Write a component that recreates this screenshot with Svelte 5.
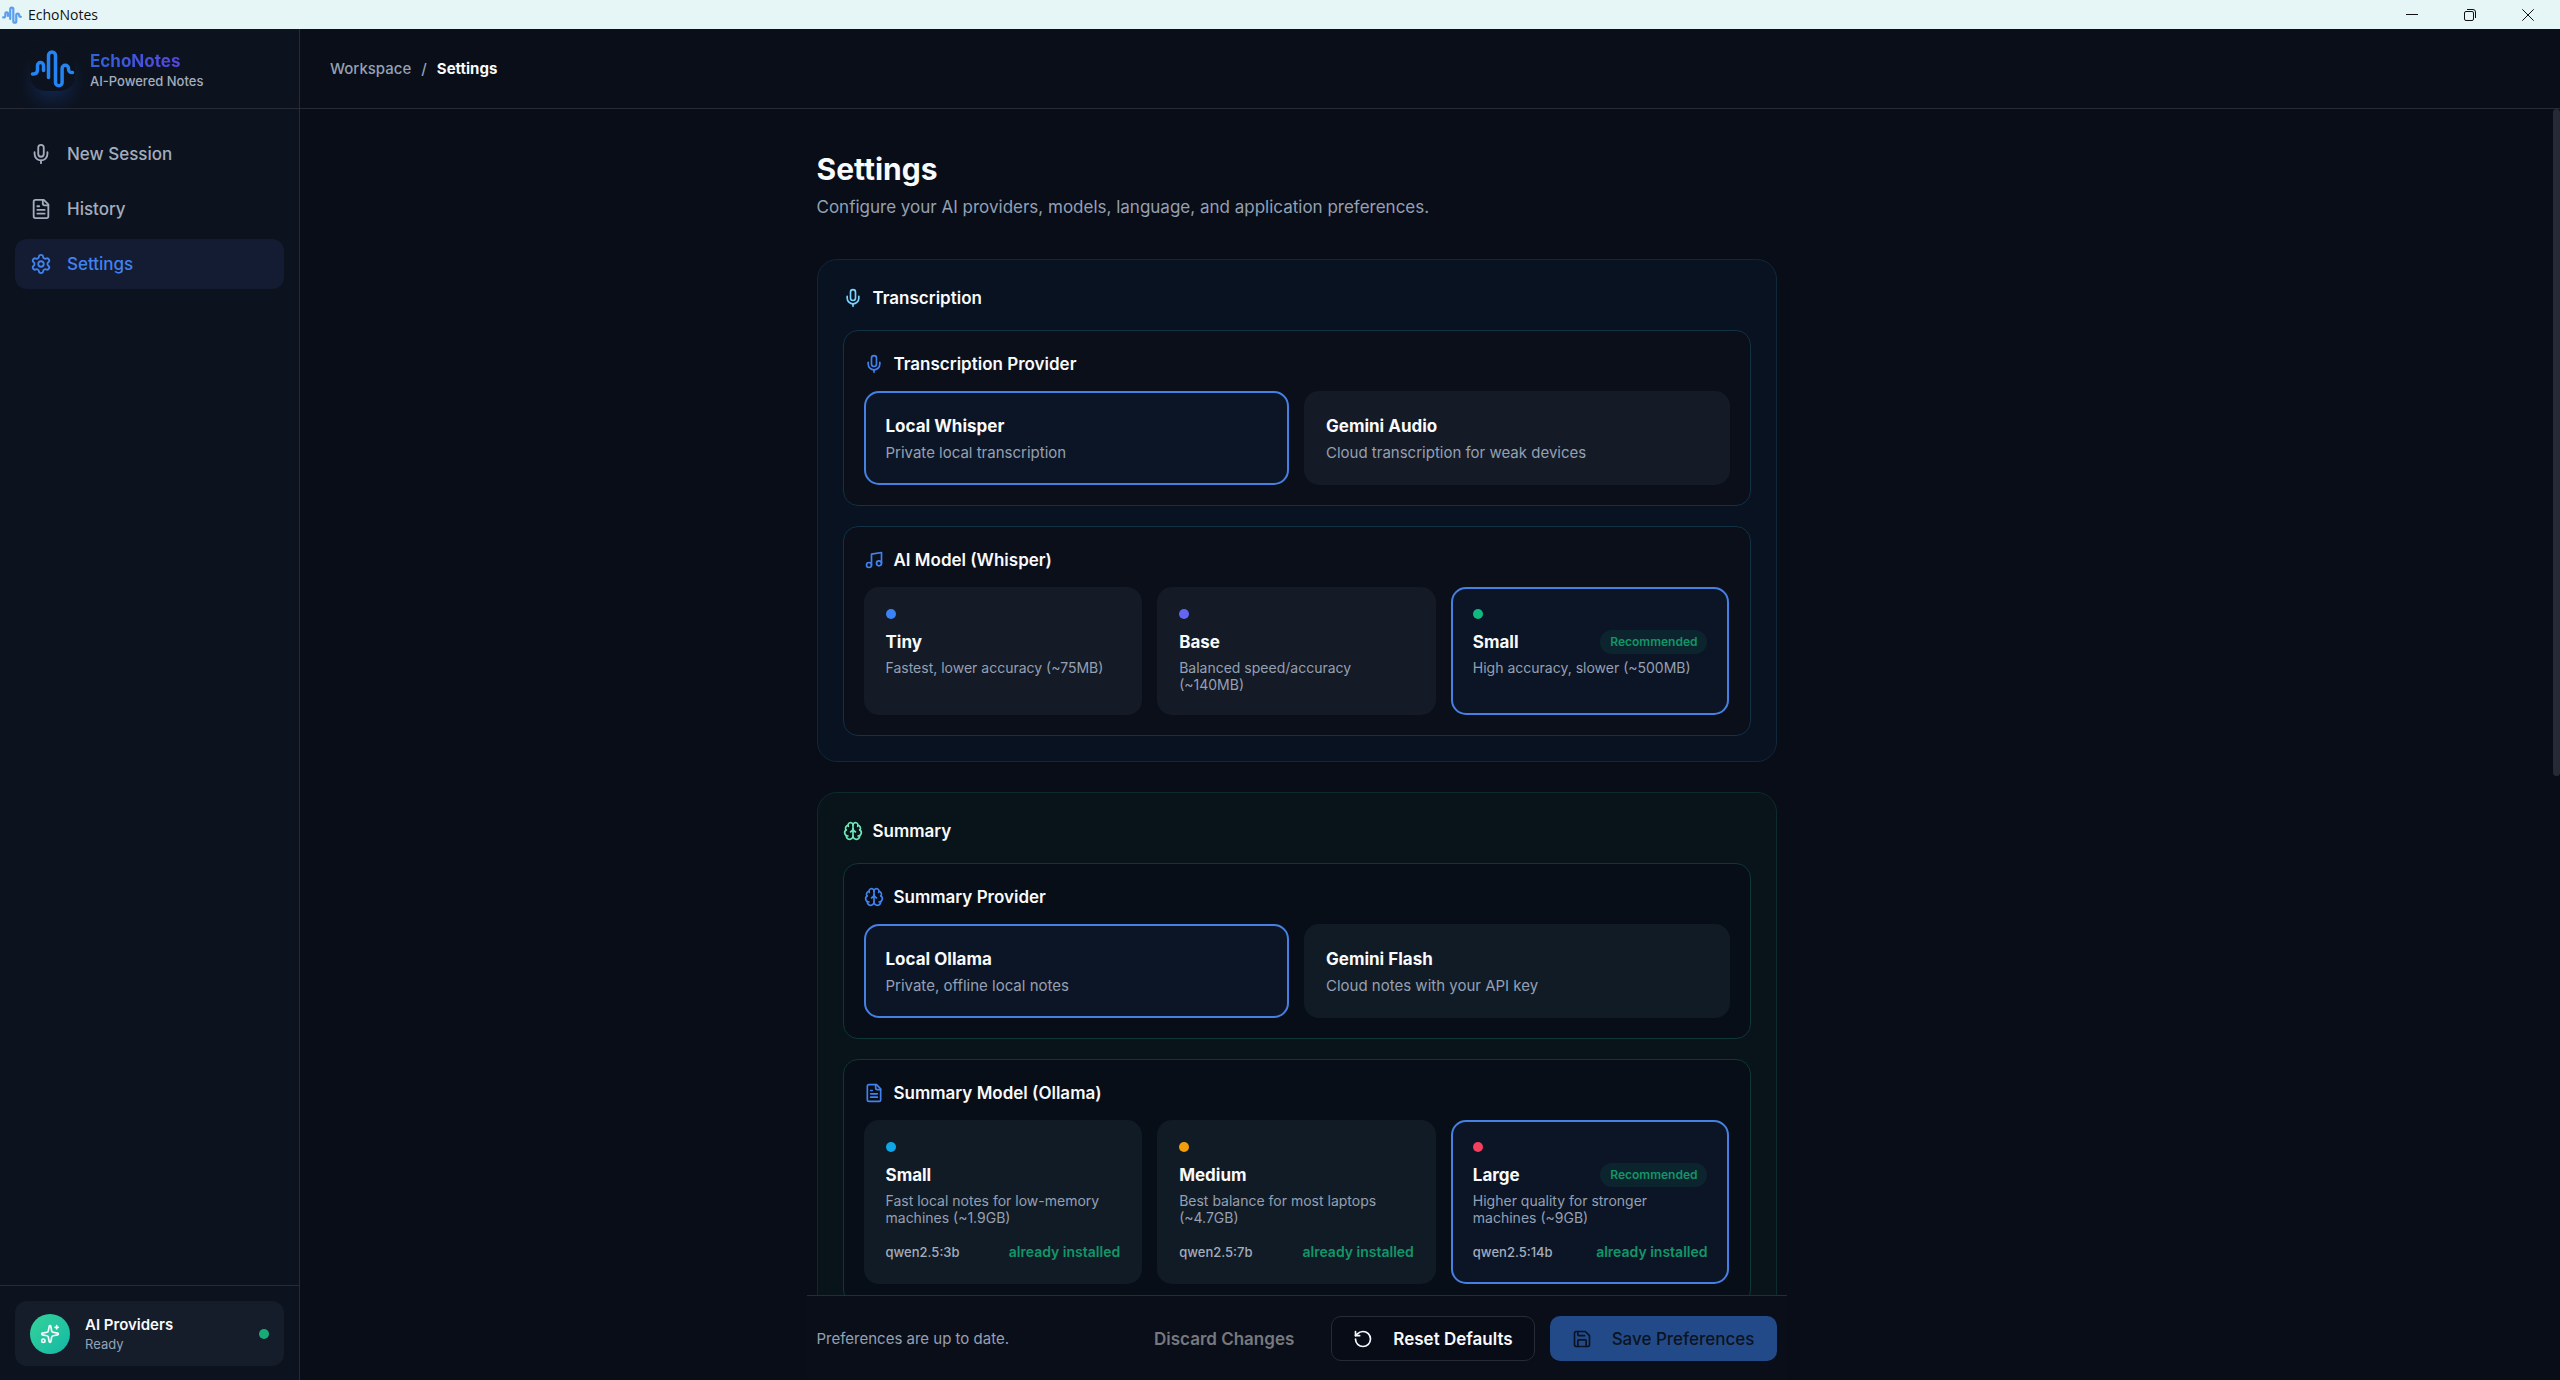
<script>
  const navItems = [
    { label: "New Session", icon: "mic" },
    { label: "History", icon: "file" },
    { label: "Settings", icon: "gear" },
  ];

  let activePage = $state("Settings");

  const sections = [
    {
      id: "transcription",
      title: "Transcription",
      icon: "mic",
      panels: [
        {
          id: "transcriptionProvider",
          title: "Transcription Provider",
          icon: "mic",
          providers: [
            { name: "Local Whisper", desc: "Private local transcription" },
            { name: "Gemini Audio", desc: "Cloud transcription for weak devices" },
          ],
        },
        {
          id: "whisperModel",
          title: "AI Model (Whisper)",
          icon: "music",
          models: [
            { name: "Tiny", desc: "Fastest, lower accuracy (~75MB)", dot: "blue" },
            { name: "Base", desc: "Balanced speed/accuracy (~140MB)", dot: "indigo" },
            {
              name: "Small",
              desc: "High accuracy, slower (~500MB)",
              dot: "emerald",
              recommended: true,
            },
          ],
        },
      ],
    },
    {
      id: "summary",
      title: "Summary",
      icon: "brain",
      panels: [
        {
          id: "summaryProvider",
          title: "Summary Provider",
          icon: "brain",
          providers: [
            { name: "Local Ollama", desc: "Private, offline local notes" },
            { name: "Gemini Flash", desc: "Cloud notes with your API key" },
          ],
        },
        {
          id: "ollamaModel",
          title: "Summary Model (Ollama)",
          icon: "file",
          models: [
            {
              name: "Small",
              desc: "Fast local notes for low-memory machines (~1.9GB)",
              dot: "sky",
              tag: "qwen2.5:3b",
            },
            {
              name: "Medium",
              desc: "Best balance for most laptops (~4.7GB)",
              dot: "amber",
              tag: "qwen2.5:7b",
            },
            {
              name: "Large",
              desc: "Higher quality for stronger machines (~9GB)",
              dot: "rose",
              tag: "qwen2.5:14b",
              recommended: true,
            },
          ],
        },
      ],
    },
  ];

  const defaults = {
    transcriptionProvider: "Local Whisper",
    whisperModel: "Small",
    summaryProvider: "Local Ollama",
    ollamaModel: "Large",
  };

  let saved = $state({ ...defaults });
  let prefs = $state({ ...defaults });
  let dirty = $derived(Object.keys(prefs).some((k) => prefs[k] !== saved[k]));

  function discard() {
    prefs = { ...saved };
  }

  function reset() {
    prefs = { ...defaults };
  }

  function save() {
    saved = { ...prefs };
  }
</script>

{#snippet logo()}
  <svg class="logo" viewBox="30 46 45 45" fill="none" stroke-linecap="round" stroke-linejoin="round">
    <path d="M32.5 74h1c3 0 4-2 4-4.500v-4a3 3 0 0 1 6 0v5" />
    <path d="M48.500 77.500V55.500a3.500 3.500 0 0 1 7 0v27a3.300 3.300 0 0 0 6.600 0V68.500a3.200 3.200 0 0 1 6.400 0c0 3 .8 4 4 4" />
  </svg>
{/snippet}

{#snippet icon(name)}
  <svg
    class="icon"
    viewBox="0 0 24 24"
    fill="none"
    stroke="currentColor"
    stroke-width="2"
    stroke-linecap="round"
    stroke-linejoin="round"
    aria-hidden="true"
  >
    {#if name === "mic"}
      <path d="M12 19v3" />
      <path d="M19 10v2a7 7 0 0 1-14 0v-2" />
      <rect x="9" y="2" width="6" height="13" rx="3" />
    {:else if name === "file"}
      <path d="M15 2H6a2 2 0 0 0-2 2v16a2 2 0 0 0 2 2h12a2 2 0 0 0 2-2V7Z" />
      <path d="M14 2v4a2 2 0 0 0 2 2h4" />
      <path d="M10 9H8" />
      <path d="M16 13H8" />
      <path d="M16 17H8" />
    {:else if name === "gear"}
      <path
        d="M9.671 4.136a2.34 2.34 0 0 1 4.659 0 2.34 2.34 0 0 0 3.319 1.915 2.34 2.34 0 0 1 2.33 4.033 2.34 2.34 0 0 0 0 3.831 2.34 2.34 0 0 1-2.33 4.033 2.34 2.34 0 0 0-3.319 1.915 2.34 2.34 0 0 1-4.659 0 2.34 2.34 0 0 0-3.32-1.915 2.34 2.34 0 0 1-2.33-4.033 2.34 2.34 0 0 0 0-3.831A2.34 2.34 0 0 1 6.35 6.051a2.34 2.34 0 0 0 3.319-1.915"
      />
      <circle cx="12" cy="12" r="3" />
    {:else if name === "music"}
      <path d="M9 18V5l12-2v13" />
      <circle cx="6" cy="18" r="3" />
      <circle cx="18" cy="16" r="3" />
    {:else if name === "brain"}
      <path d="M12 18V5" />
      <path d="M15 13a4.17 4.17 0 0 1-3-4 4.17 4.17 0 0 1-3 4" />
      <path d="M17.598 6.5A3 3 0 1 0 12 5a3 3 0 1 0-5.598 1.5" />
      <path d="M17.997 5.125a4 4 0 0 1 2.526 5.77" />
      <path d="M18 18a4 4 0 0 0 2-7.464" />
      <path d="M19.967 17.483A4 4 0 1 1 12 18a4 4 0 1 1-7.967-.517" />
      <path d="M6 18a4 4 0 0 1-2-7.464" />
      <path d="M6.003 5.125a4 4 0 0 0-2.526 5.77" />
    {:else if name === "sparkles"}
      <path
        d="M11.017 2.814a1 1 0 0 1 1.966 0l1.051 5.558a2 2 0 0 0 1.594 1.594l5.558 1.051a1 1 0 0 1 0 1.966l-5.558 1.051a2 2 0 0 0-1.594 1.594l-1.051 5.558a1 1 0 0 1-1.966 0l-1.051-5.558a2 2 0 0 0-1.594-1.594l-5.558-1.051a1 1 0 0 1 0-1.966l5.558-1.051a2 2 0 0 0 1.594-1.594z"
      />
      <path d="M20 2v4" />
      <path d="M22 4h-4" />
      <circle cx="4" cy="20" r="2" />
    {:else if name === "reset"}
      <path d="M3 12a9 9 0 1 0 9-9 9.75 9.75 0 0 0-6.740 2.740L3 8" />
      <path d="M3 3v5h5" />
    {:else if name === "save"}
      <path
        d="M15.200 3a2 2 0 0 1 1.400.6l3.800 3.800a2 2 0 0 1 .6 1.400V19a2 2 0 0 1-2 2H5a2 2 0 0 1-2-2V5a2 2 0 0 1 2-2z"
      />
      <path d="M17 21v-7a1 1 0 0 0-1-1H8a1 1 0 0 0-1 1v7" />
      <path d="M7 3v4a1 1 0 0 0 1 1h7" />
    {/if}
  </svg>
{/snippet}

<div class="window">
  <div class="titlebar">
    <div class="titlebar-name">
      {@render logo()}
      <span>EchoNotes</span>
    </div>
    <div class="titlebar-controls">
      <button type="button" aria-label="Minimize">
        <svg viewBox="0 0 12 12"><path d="M0 5.500h12" /></svg>
      </button>
      <button type="button" aria-label="Restore">
        <svg viewBox="0 0 12 12">
          <rect x=".5" y="2.500" width="9" height="9" rx="1.500" />
          <path d="M3 .5h6a2.500 2.500 0 0 1 2.500 2.500v6" />
        </svg>
      </button>
      <button type="button" aria-label="Close">
        <svg viewBox="0 0 12 12"><path d="M.3.300l11.400 11.400M11.700.300L.3 11.700" /></svg>
      </button>
    </div>
  </div>

  <div class="app">
    <aside class="sidebar">
      <div class="brand">
        <div class="brand-mark">{@render logo()}</div>
        <div>
          <div class="brand-name">EchoNotes</div>
          <div class="brand-tagline">AI-Powered Notes</div>
        </div>
      </div>

      <nav class="nav">
        {#each navItems as item (item.label)}
          <a
            href="#{item.label}"
            class="nav-item"
            class:active={activePage === item.label}
            onclick={() => (activePage = item.label)}
          >
            {@render icon(item.icon)}
            {item.label}
          </a>
        {/each}
      </nav>

      <div class="sidebar-footer">
        <div class="status">
          <div class="status-avatar">{@render icon("sparkles")}</div>
          <div class="status-text">
            <div class="status-title">AI Providers</div>
            <div class="status-sub">Ready</div>
          </div>
          <span class="status-dot"></span>
        </div>
      </div>
    </aside>

    <main class="main">
      <header class="topbar">
        <span>Workspace</span>
        <span>/</span>
        <strong>Settings</strong>
      </header>

      <div class="scroll">
        <div class="page">
          <div class="content">
            <h1>Settings</h1>
            <p class="lead">
              Configure your AI providers, models, language, and application preferences.
            </p>

            {#each sections as section (section.id)}
              <section class="section {section.id}">
                <h2>{@render icon(section.icon)}{section.title}</h2>

                {#each section.panels as panel (panel.id)}
                  <div class="panel">
                    <h3>{@render icon(panel.icon)}{panel.title}</h3>

                    {#if panel.providers}
                      <div class="providers">
                        {#each panel.providers as p (p.name)}
                          <button
                            type="button"
                            class="card"
                            class:selected={prefs[panel.id] === p.name}
                            aria-pressed={prefs[panel.id] === p.name}
                            onclick={() => (prefs[panel.id] = p.name)}
                          >
                            <span class="card-title">{p.name}</span>
                            <span class="provider-desc">{p.desc}</span>
                          </button>
                        {/each}
                      </div>
                    {:else}
                      <div class="models">
                        {#each panel.models as m (m.name)}
                          <button
                            type="button"
                            class="card"
                            class:selected={prefs[panel.id] === m.name}
                            aria-pressed={prefs[panel.id] === m.name}
                            onclick={() => (prefs[panel.id] = m.name)}
                          >
                            <span class="dot {m.dot}"></span>
                            <span class="card-head">
                              <span class="card-title">{m.name}</span>
                              {#if m.recommended}
                                <span class="badge">Recommended</span>
                              {/if}
                            </span>
                            <span class="model-desc">{m.desc}</span>
                            {#if m.tag}
                              <span class="model-meta">
                                <span class="model-tag">{m.tag}</span>
                                <span class="installed">already installed</span>
                              </span>
                            {/if}
                          </button>
                        {/each}
                      </div>
                    {/if}
                  </div>
                {/each}
              </section>
            {/each}
          </div>

          <div class="savebar">
            <span class="savebar-status">
              {dirty ? "You have unsaved changes." : "Preferences are up to date."}
            </span>
            <div class="savebar-actions">
              <button type="button" class="btn ghost" disabled={!dirty} onclick={discard}>
                Discard Changes
              </button>
              <button type="button" class="btn outline" onclick={reset}>
                {@render icon("reset")}Reset Defaults
              </button>
              <button type="button" class="btn primary" disabled={!dirty} onclick={save}>
                {@render icon("save")}Save Preferences
              </button>
            </div>
          </div>
        </div>
        <div class="scrollbar"><div class="thumb"></div></div>
      </div>
    </main>
  </div>
</div>

<style>
  :global(body) {
    margin: 0;
    background: #090d18;
  }

  .window {
    height: 100vh;
    display: flex;
    flex-direction: column;
    overflow: hidden;
    font-family: Inter, "Liberation Sans", sans-serif;
    font-size: 17px;
    line-height: 26px;
    color: #f8fafc;
  }

  .window * {
    box-sizing: border-box;
  }

  button {
    font: inherit;
    color: inherit;
    cursor: pointer;
  }

  h1,
  h2,
  h3,
  p {
    margin: 0;
  }

  .icon {
    width: 20px;
    height: 20px;
    flex-shrink: 0;
  }

  .logo {
    display: block;
    stroke: #2484f2;
    stroke-width: 3.5;
  }

  .titlebar {
    flex: 0 0 29px;
    display: flex;
    justify-content: space-between;
    background: #e6f6f7;
    color: #111;
  }

  .titlebar-name {
    display: flex;
    align-items: center;
    gap: 6px;
    padding-left: 2px;
    font-family: "Open Sans", "Noto Sans", sans-serif;
    font-size: 14px;
  }

  .titlebar .logo {
    width: 20px;
    height: 20px;
    stroke: #5a9fee;
    stroke-width: 5;
  }

  .titlebar-controls {
    display: flex;
    padding-right: 3px;
  }

  .titlebar-controls button {
    width: 58px;
    padding: 0;
    border: none;
    background: none;
    display: flex;
    align-items: center;
    justify-content: center;
  }

  .titlebar-controls svg {
    width: 12px;
    height: 12px;
    fill: none;
    stroke: #111;
  }

  .app {
    flex: 1;
    min-height: 0;
    display: flex;
  }

  .sidebar {
    width: 300px;
    flex-shrink: 0;
    display: flex;
    flex-direction: column;
    background: #0d131e;
    border-right: 1px solid #262b36;
  }

  .brand {
    height: 80px;
    flex-shrink: 0;
    display: flex;
    align-items: center;
    gap: 15px;
    padding: 0 30px;
    border-bottom: 1px solid #262b36;
  }

  .brand-mark {
    border-radius: 15px;
    background: #0d131e;
    box-shadow: 0 12px 18px -4px rgba(37, 99, 235, 0.25);
  }

  .brand-mark .logo {
    width: 45px;
    height: 45px;
  }

  .brand-name {
    width: fit-content;
    padding-top: 2px;
    font-size: 17px;
    line-height: 22px;
    font-weight: 700;
    background: linear-gradient(90deg, #2f62dc, #5546de);
    background-clip: text;
    color: transparent;
  }

  .brand-tagline {
    font-size: 13px;
    line-height: 18px;
    font-weight: 500;
    color: #a3adbd;
  }

  .nav {
    flex: 1;
    display: flex;
    flex-direction: column;
    gap: 5px;
    padding: 20px 15px;
  }

  .nav-item {
    height: 50px;
    display: flex;
    align-items: center;
    gap: 15px;
    padding: 0 15px;
    border-radius: 12px;
    font-weight: 500;
    color: #a3adbd;
    text-decoration: none;
  }

  .nav-item .icon {
    width: 22px;
    height: 22px;
  }

  .nav-item.active {
    background: #131c33;
    color: #4282ee;
  }

  .sidebar-footer {
    padding: 15px 15px 14px;
    border-top: 1px solid #262b36;
  }

  .status {
    height: 65px;
    display: flex;
    align-items: center;
    gap: 15px;
    padding: 0 15px;
    border-radius: 12px;
    background: #151c2a;
  }

  .status-avatar {
    width: 40px;
    height: 40px;
    display: flex;
    align-items: center;
    justify-content: center;
    border-radius: 50%;
    background: linear-gradient(135deg, #34d399, #14b8a6);
  }

  .status-text {
    flex: 1;
  }

  .status-title {
    font-size: 15px;
    line-height: 20px;
    font-weight: 600;
  }

  .status-sub {
    font-size: 13px;
    line-height: 18px;
    color: #94a3b8;
  }

  .status-dot {
    width: 10px;
    height: 10px;
    border-radius: 50%;
    background: #18ab79;
  }

  .main {
    flex: 1;
    min-width: 0;
    display: flex;
    flex-direction: column;
    background: #090d18;
  }

  .topbar {
    height: 80px;
    flex-shrink: 0;
    display: flex;
    align-items: center;
    gap: 10px;
    padding: 0 30px;
    border-bottom: 1px solid #262b36;
    background: #0a0e18;
    font-size: 15px;
    font-weight: 500;
    color: #94a0b3;
  }

  .topbar strong {
    font-weight: 700;
    color: #f8fafc;
  }

  .scroll {
    flex: 1;
    min-height: 0;
    display: flex;
  }

  .page {
    flex: 1;
    min-width: 0;
    max-width: 1240px;
    margin: 0 auto;
    padding: 0 10px;
    display: flex;
    flex-direction: column;
  }

  .content {
    flex: 1;
    min-height: 0;
    max-width: 980px;
    padding: 40px 10px 0;
    margin-left: -10px;
    overflow: hidden;
  }

  h1 {
    font-size: 30px;
    line-height: 40px;
    font-weight: 700;
  }

  .lead {
    margin-top: 5px;
    color: #94a0b3;
  }

  .section {
    padding: 25px;
    border: 1px solid #10283a;
    border-radius: 20px;
    background: #081220;
  }

  .lead + .section {
    margin-top: 39px;
  }

  .section + .section {
    margin-top: 30px;
  }

  .section.summary {
    border-color: #0e2b2c;
    background: #08131a;
  }

  h2,
  h3 {
    display: flex;
    align-items: center;
    gap: 10px;
    font-size: 17px;
    line-height: 26px;
    font-weight: 600;
  }

  h2 .icon {
    color: #7dd3fc;
  }

  .summary h2 .icon {
    color: #6ee7b7;
  }

  h3 .icon {
    color: #4282ee;
  }

  .panel {
    margin-top: 20px;
    padding: 20px;
    border: 1px solid #123245;
    border-radius: 15px;
    background: #0a0f1a;
  }

  h2 + .panel {
    margin-top: 19px;
  }

  .summary .panel {
    border-color: #0f3735;
    background: #080e17;
  }

  .providers,
  .models {
    display: grid;
    gap: 15px;
    margin-top: 14px;
  }

  .providers {
    grid-template-columns: repeat(2, minmax(0, 1fr));
  }

  .models {
    grid-template-columns: repeat(3, minmax(0, 1fr));
  }

  .card {
    display: flex;
    flex-direction: column;
    padding: 20px;
    border: 2px solid transparent;
    border-radius: 15px;
    background: #141a26;
    text-align: left;
  }

  .summary .card {
    background: #111b26;
  }

  .section .card.selected {
    border-color: #4680e2;
    background: #0c1526;
  }

  .card-head {
    display: flex;
    align-items: center;
    justify-content: space-between;
  }

  .card-title {
    font-size: 17px;
    line-height: 26px;
    font-weight: 700;
  }

  .provider-desc {
    margin-top: 4px;
    font-size: 15px;
    line-height: 20px;
    color: #94a0b3;
  }

  .dot {
    width: 10px;
    height: 10px;
    margin-bottom: 10px;
    border-radius: 50%;
  }

  .blue {
    background: #3b82f6;
  }

  .indigo {
    background: #6366f1;
  }

  .emerald {
    background: #10b981;
  }

  .sky {
    background: #0ea5e9;
  }

  .amber {
    background: #f59e0b;
  }

  .rose {
    background: #f43f5e;
  }

  .badge {
    padding: 2px 10px;
    border-radius: 12px;
    background: #0c242d;
    font-size: 12px;
    line-height: 20px;
    font-weight: 600;
    color: #129668;
  }

  .model-desc {
    margin-top: 4px;
    font-size: 14px;
    line-height: 17px;
    color: #94a0b3;
  }

  .model-meta {
    display: flex;
    align-items: center;
    justify-content: space-between;
    margin-top: 16px;
    line-height: 20px;
  }

  .model-tag {
    font-size: 13px;
    font-weight: 500;
    color: #a3adbd;
  }

  .installed {
    font-size: 14px;
    font-weight: 600;
    color: #129668;
  }

  .savebar {
    max-width: 980px;
    margin-left: -10px;
    display: flex;
    align-items: center;
    justify-content: space-between;
    padding: 20px 10px 19px;
    border-top: 1px solid #262b36;
    background: #0a0e19;
  }

  .savebar-status {
    font-size: 15px;
    color: #94a0b3;
  }

  .savebar-actions {
    display: flex;
    gap: 15px;
  }

  .btn {
    height: 45px;
    display: flex;
    align-items: center;
    gap: 20px;
    padding: 0 21px;
    border: 1px solid transparent;
    border-radius: 10px;
    background: none;
    font-weight: 600;
    white-space: nowrap;
  }

  .ghost:disabled {
    color: #76797f;
  }

  .outline {
    border-color: #262b36;
    background: #080c17;
  }

  .primary {
    background: #3b82f6;
    font-weight: 500;
    color: #0b1322;
  }

  .primary:disabled {
    background: #234a88;
  }

  .btn:disabled {
    cursor: default;
  }

  .scrollbar {
    width: 7px;
    flex-shrink: 0;
  }

  .thumb {
    height: 52.5%;
    border-radius: 4px;
    background: #252a36;
  }
</style>
